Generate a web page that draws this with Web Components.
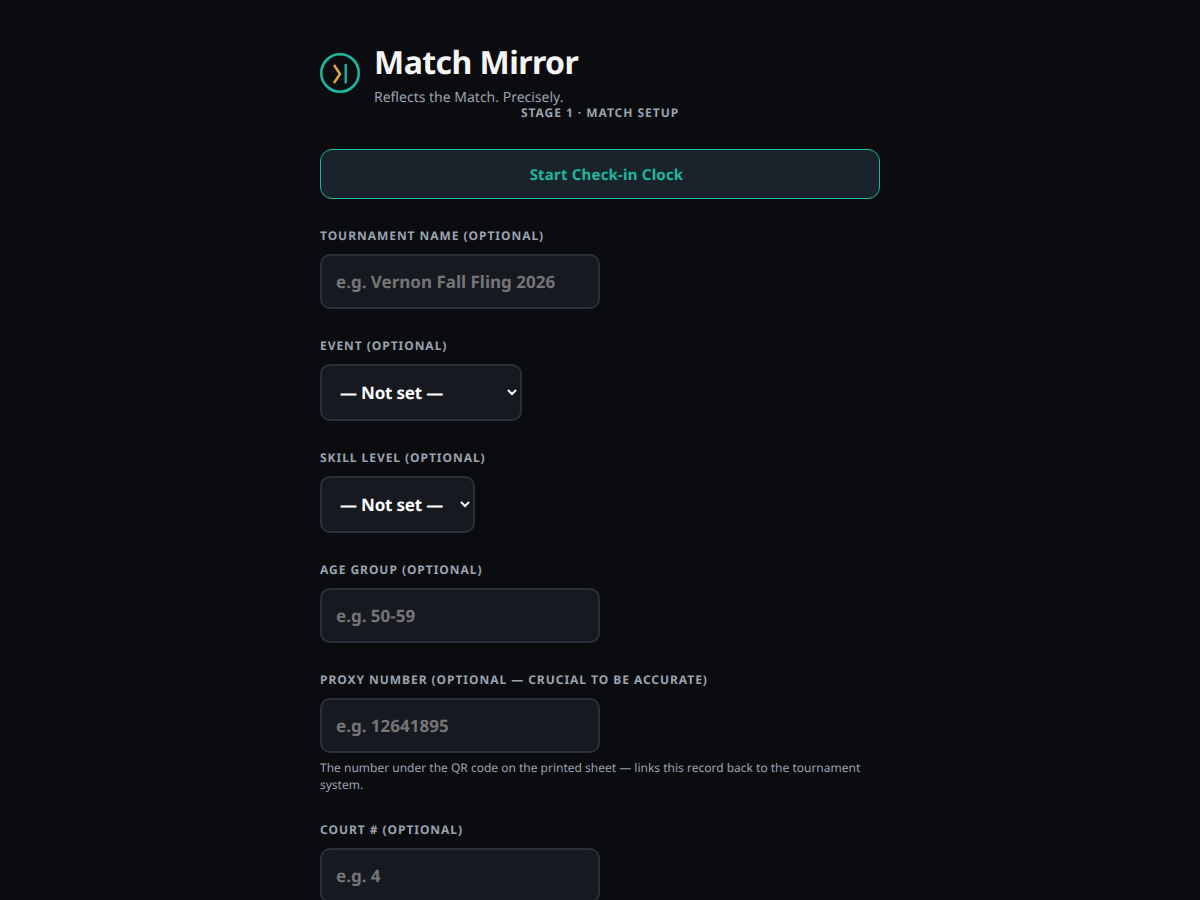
<!DOCTYPE html>
<html lang="en"><head><meta charset="utf-8"><title>Match Mirror</title>
<style>
html,body{margin:0;background:#0b0c10;color:#f5f5f5;font-family:"Noto Sans",sans-serif;height:900px;overflow:hidden;text-rendering:geometricPrecision}
</style></head><body>
<mm-app>
  <mm-header title="Match Mirror" tagline="Reflects the Match. Precisely."></mm-header>
  <mm-stage>STAGE 1 · MATCH SETUP</mm-stage>
  <mm-clock-button>Start Check-in Clock</mm-clock-button>
  <mm-field label="TOURNAMENT NAME (OPTIONAL)" placeholder="e.g. Vernon Fall Fling 2026"></mm-field>
  <mm-field label="EVENT (OPTIONAL)" select="202"></mm-field>
  <mm-field label="SKILL LEVEL (OPTIONAL)" select="155"></mm-field>
  <mm-field label="AGE GROUP (OPTIONAL)" placeholder="e.g. 50-59"></mm-field>
  <mm-field label="PROXY NUMBER (OPTIONAL — CRUCIAL TO BE ACCURATE)" placeholder="e.g. 12641895" hint="The number under the QR code on the printed sheet — links this record back to the tournament system."></mm-field>
  <mm-field label="COURT # (OPTIONAL)" placeholder="e.g. 4"></mm-field>
</mm-app>
<script>
class MMApp extends HTMLElement{constructor(){super();this.attachShadow({mode:'open'}).innerHTML=`<style>
:host{display:flex;flex-direction:column;width:560px;margin:0 auto;padding-top:40px}
</style><slot></slot>`}}
class MMHeader extends HTMLElement{constructor(){super();const s=this.attachShadow({mode:'open'});s.innerHTML=`<style>
:host{display:flex;align-items:center;gap:14px;height:66px}
svg{width:40px;height:40px;flex:none;display:block}
.t{display:flex;flex-direction:column;align-self:flex-start;padding-top:1px}
h1{margin:0;font:700 32px/44px "Noto Sans",sans-serif;letter-spacing:-.55px;color:#f5f5f5}
p{margin:3px 0 0;font:400 14px/20px "Noto Sans",sans-serif;color:#9aa3ae}
</style><svg viewBox="0 0 40 40" fill="none"><circle cx="20" cy="20" r="18.75" stroke="#1cb89f" stroke-width="2.5"/><path d="M14 12 20 21l-6 9" stroke="#e8a33d" stroke-width="2.500"/><path d="M25.700 11v19.500" stroke="#1cb89f" stroke-width="2.300"/></svg><div class="t"><h1></h1><p></p></div>`;
s.querySelector('h1').textContent=this.getAttribute('title');s.querySelector('p').textContent=this.getAttribute('tagline')}}
class MMStage extends HTMLElement{constructor(){super();this.attachShadow({mode:'open'}).innerHTML=`<style>
:host{display:block;text-align:center;font:700 12px/16px "Noto Sans",sans-serif;letter-spacing:.96px;color:#9aa3ae;margin:-1px 0 0}
</style><slot></slot>`}}
class MMClock extends HTMLElement{constructor(){super();this.attachShadow({mode:'open'}).innerHTML=`<style>
:host{display:block;margin:28px 0 28px}
button{display:block;box-sizing:border-box;width:100%;height:50px;background:#1a222b;border:1px solid #1cb89f;border-radius:12px;color:#1cb89f;font:700 15px "Noto Sans",sans-serif;letter-spacing:.2px;padding:2px 0 0 13px;text-rendering:geometricPrecision}
</style><button type="button"><slot></slot></button>`}}
class MMField extends HTMLElement{constructor(){super();const s=this.attachShadow({mode:'open'});const sel=this.getAttribute('select');
s.innerHTML=`<style>
:host{display:block;margin-bottom:28px}
label{display:block;font:700 12px/17px "Noto Sans",sans-serif;letter-spacing:.96px;color:#9aa3ae;margin-bottom:10px}
input,select{display:block;box-sizing:border-box;background:#161920;border:2px solid #2a2f3a;border-radius:10px;color:#fff;font:700 17px "Noto Sans",sans-serif;outline:none;margin:0;text-rendering:geometricPrecision}
input{width:280px;height:55px;padding:0 14px}
select{height:57px;padding:0 14px;letter-spacing:-.2px}
input::placeholder{color:#757575;opacity:1}
p{margin:6px 0 0;font:400 12px/17px "Noto Sans",sans-serif;color:#9aa3ae}
</style><label></label>${sel?`<select style="width:${sel}px"><option>— Not set —</option></select>`:'<input type="text">'}<p hidden></p>`;
s.querySelector('label').textContent=this.getAttribute('label');
if(!sel)s.querySelector('input').placeholder=this.getAttribute('placeholder');
const h=this.getAttribute('hint');if(h){const p=s.querySelector('p');p.hidden=false;p.textContent=h}}}
customElements.define('mm-app',MMApp);customElements.define('mm-header',MMHeader);customElements.define('mm-stage',MMStage);customElements.define('mm-clock-button',MMClock);customElements.define('mm-field',MMField);
</script>
</body></html>
